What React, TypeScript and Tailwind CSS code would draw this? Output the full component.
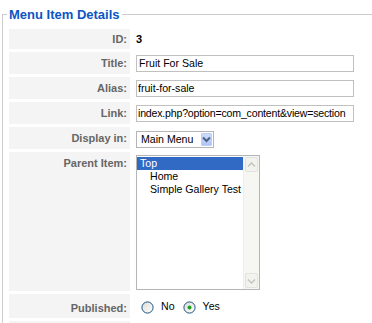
import React from "react";

const Label = ({ children, className = "" }: { children?: React.ReactNode; className?: string }) => (
  <div
    className={`w-[121px] shrink-0 bg-[#f4f4f4] text-right pr-[3px] font-bold text-[11px] leading-[13px] text-[#666666] ${className}`}
  >
    {children}
  </div>
);

const Radio = ({ checked }: { checked?: boolean }) => (
  <svg width="13" height="13" viewBox="0 0 13 13" className="shrink-0">
    <defs>
      <linearGradient id={checked ? "rg1" : "rg0"} x1="0" y1="0" x2="1" y2="1">
        <stop offset="0" stopColor="#dcdcd6" />
        <stop offset="1" stopColor="#ffffff" />
      </linearGradient>
    </defs>
    <circle cx="6.5" cy="6.5" r="5.6" fill={`url(#${checked ? "rg1" : "rg0"})`} stroke="#1c5180" strokeWidth="1" />
    {checked && <circle cx="6.5" cy="6.5" r="2" fill="#21a121" />}
  </svg>
);

const TextInput = ({ value, className = "" }: { value: string; className?: string }) => (
  <div
    className={`mt-[3px] w-[218px] h-[17px] border border-[#c0c0c0] bg-white pl-[1px] overflow-hidden whitespace-nowrap font-['Liberation_Sans',Arial,sans-serif] text-[10.6px] leading-[15px] text-black ${className}`}
  >
    {value}
  </div>
);

export default function App() {
  return (
    <div className="w-[372px] h-[323px] overflow-hidden bg-white font-['Liberation_Sans',Arial,sans-serif]">
      <fieldset className="ml-[2px] mt-[7px] w-[430px] border border-[#cccccc] px-[4px] pt-[7px] pb-4">
        <legend className="px-[2px] text-[13px] leading-[15px] font-bold text-[#0b55c4]">Menu Item Details</legend>
        <div className="pl-[2px] flex flex-col gap-[3px]">
          {/* ID */}
          <div className="flex gap-[6px] h-[20px]">
            <Label className="pt-[4px]">ID:</Label>
            <div className="pt-[4px] text-[11px] leading-[13px] font-bold text-black">3</div>
          </div>
          {/* Title */}
          <div className="flex gap-[6px] h-[22px]">
            <Label className="pt-[5px]">Title:</Label>
            <TextInput value="Fruit For Sale" className="pl-[2px]" />
          </div>
          {/* Alias */}
          <div className="flex gap-[6px] h-[22px]">
            <Label className="pt-[5px]">Alias:</Label>
            <TextInput value="fruit-for-sale" />
          </div>
          {/* Link */}
          <div className="flex gap-[6px] h-[22px]">
            <Label className="pt-[5px]">Link:</Label>
            <TextInput value="index.php?option=com_content&view=section" className="tracking-[-0.2px]" />
          </div>
          {/* Display in */}
          <div className="flex gap-[6px] h-[22px]">
            <Label className="pt-[5px]">Display in:</Label>
            <div className="mt-[4px] w-[78px] h-[17px] border border-[#b5b5b5] bg-white flex items-center justify-between pl-[4px] pr-[1px]">
              <span className="text-[10.6px] leading-[13px] text-black whitespace-nowrap">Main Menu</span>
              <div className="w-[11px] h-[13px] rounded-[1px] border border-[#b9cdf6] bg-gradient-to-b from-[#cddbfc] to-[#b0c6f7] flex items-center justify-center">
                <svg width="9" height="7" viewBox="0 0 9 7">
                  <path d="M1 1.5 L4.5 5 L8 1.5" fill="none" stroke="#4d6185" strokeWidth="2" />
                </svg>
              </div>
            </div>
          </div>
          {/* Parent Item */}
          <div className="flex gap-[6px] h-[139px]">
            <Label className="pt-[5px]">Parent Item:</Label>
            <div className="mt-[3px] w-[124px] h-[135px] border border-[#b5b5b5] bg-white flex">
              <div className="flex-1 flex flex-col pt-[1px] text-[10.6px] leading-[13px] text-black">
                <div className="bg-[#316ac5] text-white pl-[3px] h-[13px]">Top</div>
                <div className="pl-[13px] h-[13px]">Home</div>
                <div className="pl-[13px] h-[13px] whitespace-nowrap">Simple Gallery Test</div>
              </div>
              <div className="w-[16px] bg-[#f6f6f2] flex flex-col justify-between border-l border-[#eeeeea]">
                <div className="m-[1px] h-[15px] border border-[#e3e3dd] rounded-[2px] bg-[#f2f2ee] flex items-center justify-center">
                  <svg width="9" height="6" viewBox="0 0 9 6">
                    <path d="M1 4.5 L4.5 1 L8 4.5" fill="none" stroke="#c6c6c0" strokeWidth="1.6" />
                  </svg>
                </div>
                <div className="m-[1px] h-[15px] border border-[#e3e3dd] rounded-[2px] bg-[#f2f2ee] flex items-center justify-center">
                  <svg width="9" height="6" viewBox="0 0 9 6">
                    <path d="M1 1.5 L4.5 5 L8 1.5" fill="none" stroke="#c6c6c0" strokeWidth="1.6" />
                  </svg>
                </div>
              </div>
            </div>
          </div>
          {/* Published */}
          <div className="flex gap-[6px] h-[24px]">
            <Label className="pt-[8px]">Published:</Label>
            <div className="flex items-center pl-[5px] pt-[2px] text-[10.6px] text-black">
              <Radio />
              <span className="ml-[7px]">No</span>
              <span className="ml-[8px]"><Radio checked /></span>
              <span className="ml-[7px]">Yes</span>
            </div>
          </div>
          {/* next row (clipped at the bottom edge) */}
          <div className="flex gap-[6px] h-[22px]">
            <Label />
            <div />
          </div>
        </div>
      </fieldset>
    </div>
  );
}
